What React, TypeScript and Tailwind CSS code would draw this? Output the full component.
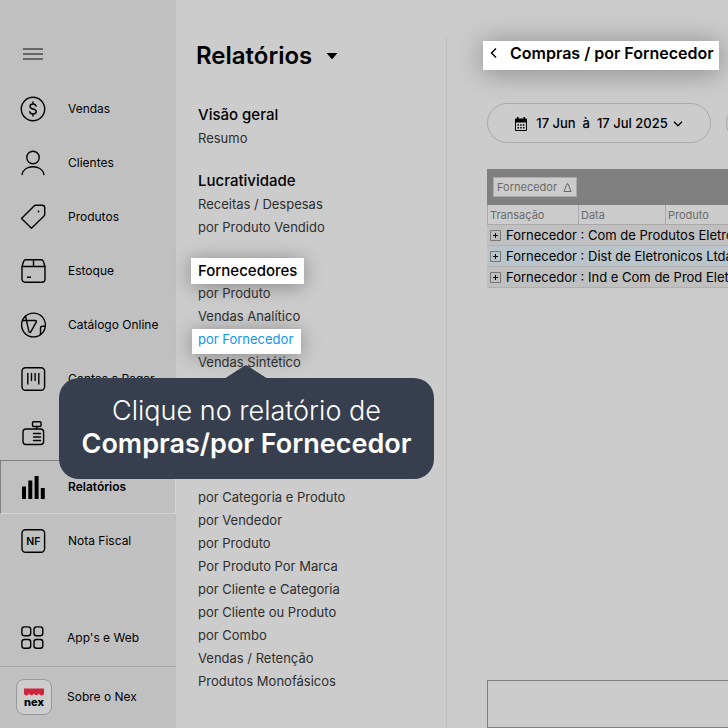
import type { ReactNode } from "react";
import clsx from "clsx";

const icons: Record<string, ReactNode> = {
  vendas: (
    <>
      <circle cx="13" cy="13" r="11.7" />
      <path d="M13 6v2M13 18v2M16 10.2c-.3-1.4-1.4-2.2-3-2.2-1.800 0-3 .9-3 2.400 0 3.400 6.200 1.700 6.200 5.100 0 1.600-1.300 2.500-3.200 2.500-1.800 0-3-.8-3.300-2.400" />
    </>
  ),
  clientes: (
    <>
      <circle cx="13" cy="7.500" r="6.200" />
      <path d="M2 24.500c1-5 5.500-7.800 11-7.800s10 2.800 11 7.800" />
    </>
  ),
  produtos: (
    <>
      <path d="M1.500 14.500 13.800 2.200c.6-.6 1.200-.9 2-.9h6.400c1.500 0 2.500 1 2.500 2.500v6.400c0 .8-.3 1.500-.9 2L11.500 24.300z" />
      <circle cx="18.500" cy="7.500" r=".9" fill="currentColor" stroke="none" />
    </>
  ),
  estoque: (
    <>
      <path d="M2 8.500h23V21c0 2-1.200 3.200-3.200 3.200H5.200C3.200 24.200 2 23 2 21zM2 8.500l1.600-5C4 2.300 4.900 1.700 6 1.700h15c1.100 0 2 .6 2.400 1.800l1.600 5M13.500 1.700v6.800M7.500 19.200h3" />
    </>
  ),
  catalogo: (
    <>
      <circle cx="13.500" cy="13" r="11.900" />
      <path d="M2.500 8.500h12.800c1 0 1.400.8.900 1.600l-5.400 9.700c-.5.900-1.500.8-1.900-.1L5.500 3.900M25.200 14.300h-2.700c-1.200 0-2 .8-2 2v6.200" />
    </>
  ),
  contas: (
    <>
      <rect x="2" y="1.700" width="22.600" height="22.600" rx="3.500" />
      <path d="M7.800 7.500v10.500M11.500 7.500v7M15.100 7.500v7M18.800 7.500v10.500" />
    </>
  ),
  caixa: (
    <>
      <rect x="3" y="9" width="20.600" height="15.500" rx="3" />
      <rect x="12.500" y="1.700" width="8.500" height="4.800" rx="1" />
      <path d="M16.700 6.500V9M13.500 13.500h7M13.500 17h7M13.500 20.500h7" />
    </>
  ),
  relatorios: (
    <path
      d="M2 12.500h4v12.500H2zM8.300 6.500h4V25h-4zM14.600 2h4v23h-4zM20.800 14h4v11h-4z"
      fill="currentColor"
      stroke="none"
    />
  ),
  nota: (
    <>
      <rect x="2" y="1.700" width="22.600" height="22.600" rx="3.500" />
      <text
        x="13.300"
        y="17"
        textAnchor="middle"
        fontSize="10.500"
        fontWeight="600"
        fill="currentColor"
        stroke="none"
      >
        NF
      </text>
    </>
  ),
  apps: (
    <>
      <rect x="1.900" y="1.900" width="8.800" height="8.800" rx="2.500" />
      <rect x="14" y="1.900" width="8.800" height="8.800" rx="2.500" />
      <rect x="1.900" y="14.500" width="8.800" height="8.800" rx="2.500" />
      <rect x="14" y="14.500" width="8.800" height="8.800" rx="2.500" />
    </>
  ),
};

const NAV_ITEMS = [
  { icon: "vendas", label: "Vendas" },
  { icon: "clientes", label: "Clientes" },
  { icon: "produtos", label: "Produtos" },
  { icon: "estoque", label: "Estoque" },
  { icon: "catalogo", label: "Catálogo Online" },
  { icon: "contas", label: "Contas a Pagar" },
  { icon: "caixa" },
  { icon: "relatorios", label: "Relatórios", active: true },
  { icon: "nota", label: "Nota Fiscal" },
];

const REPORT_GROUPS = [
  { title: "Visão geral", items: ["Resumo"] },
  { title: "Lucratividade", items: ["Receitas / Despesas", "por Produto Vendido"] },
  {
    title: "Fornecedores",
    items: ["por Produto", "Vendas Analítico", "por Fornecedor", "Vendas Sintético"],
  },
];

const SALES_REPORTS = [
  "por Categoria e Produto",
  "por Vendedor",
  "por Produto",
  "Por Produto Por Marca",
  "por Cliente e Categoria",
  "por Cliente ou Produto",
  "por Combo",
  "Vendas / Retenção",
  "Produtos Monofásicos",
];

const SUPPLIERS = [
  "Com de Produtos Eletronicos",
  "Dist de Eletronicos Ltda",
  "Ind e Com de Prod Eletronicos",
];

function Icon({ name }: { name: string }) {
  return (
    <svg
      viewBox="0 0 26 26"
      className="size-[26px] shrink-0"
      fill="none"
      stroke="currentColor"
      strokeWidth="1.4"
      strokeLinecap="round"
      strokeLinejoin="round"
      aria-hidden="true"
    >
      {icons[name]}
    </svg>
  );
}

function Sidebar() {
  return (
    <aside className="flex w-44 shrink-0 flex-col bg-[#c0c0c0] text-xs text-black">
      <div className="flex h-[82px] items-center px-[23px] pt-[26px]">
        <button type="button" aria-label="Menu" className="w-5">
          <svg viewBox="0 0 20 12" className="h-3 w-5" stroke="#484848" strokeWidth="1.400" aria-hidden="true">
            <path d="M0 1h20M0 6h20M0 11h20" />
          </svg>
        </button>
      </div>
      <nav>
        {NAV_ITEMS.map((item) => (
          <a
            key={item.icon}
            href="#"
            aria-label={item.label ?? item.icon}
            className={clsx(
              "flex h-[54px] items-center gap-[22px] border pl-[19px]",
              item.active
                ? "border-t-[#808080] border-r-[#d4d4d4] border-b-[#d4d4d4] border-l-[#808080] font-semibold"
                : "border-transparent"
            )}
          >
            <Icon name={item.icon} />
            {item.label}
          </a>
        ))}
      </nav>
      <div className="mt-auto">
        <a href="#" className="flex h-[58px] items-center gap-[21px] border-b border-[#a9a9a9] pl-5">
          <Icon name="apps" />
          App's e Web
        </a>
        <a href="#" className="flex h-[61px] items-center gap-[15px] pb-0.5 pl-4">
          <svg viewBox="0 0 36 36" className="size-9 shrink-0" aria-hidden="true">
            <rect x=".5" y=".5" width="35" height="35" rx="7.500" fill="#cdcdcd" stroke="#999" />
            <path
              d="M8 9.500h20v4a2.500 2.500 0 0 1-5 .8 2.600 2.600 0 0 1-5 0 2.600 2.600 0 0 1-5 0 2.500 2.500 0 0 1-5-.8z"
              fill="#d0243c"
            />
            <text x="18" y="27" textAnchor="middle" fontSize="11" fontWeight="800">
              nex
            </text>
          </svg>
          Sobre o Nex
        </a>
      </div>
    </aside>
  );
}

function ReportLink({ label, active }: { label: string; active?: boolean }) {
  return (
    <li className="flex h-[23px] items-start pt-px">
      <a
        href="#"
        className={clsx(
          "leading-[21px]",
          active
            ? "-ml-1.5 bg-white pr-2 pb-1 pl-1.5 text-[#0a95f7] shadow-[0_2px_20px_rgba(0,0,0,0.35)]"
            : "text-[#2e2e2e]"
        )}
      >
        {label}
      </a>
    </li>
  );
}

function ReportMenu() {
  return (
    <section className="w-[271px] shrink-0 pt-9">
      <div className="h-full border-r border-[#bdbdbd] pl-[22px]">
        <button type="button" className="-ml-0.5 flex h-10 items-center gap-3.5 text-2xl font-semibold">
          Relatórios
          <svg viewBox="0 0 12 6" className="h-1.5 w-3" aria-hidden="true">
            <path d="M.5 0h11L6.800 5.400a1 1 0 0 1-1.600 0z" />
          </svg>
        </button>
        <div className="mt-7 flex flex-col gap-5 text-[13px]">
          {REPORT_GROUPS.map((group) => (
            <div key={group.title}>
              <h2 className="flex h-[23px] items-center text-[15px] font-medium text-black">
                {group.title === "Fornecedores" ? (
                  <span className="-ml-[7px] shrink-0 bg-white px-[7px] leading-[26px] shadow-[0_2px_20px_rgba(0,0,0,0.35)]">
                    {group.title}
                  </span>
                ) : (
                  group.title
                )}
              </h2>
              <ul>
                {group.items.map((label) => (
                  <ReportLink key={label} label={label} active={label === "por Fornecedor"} />
                ))}
              </ul>
            </div>
          ))}
        </div>
        <ul className="mt-28 pb-8 text-[13px]">
          {SALES_REPORTS.map((label) => (
            <ReportLink key={label} label={label} />
          ))}
        </ul>
      </div>
    </section>
  );
}

function SupplierTable() {
  return (
    <div className="mt-[26px] w-[480px] bg-[#808080]">
      <div className="flex h-9 items-center pl-1.5">
        <button
          type="button"
          className="flex h-5 items-center gap-1.5 border border-[#aaa] bg-[#ccc] pr-1 pl-[3px] text-[11px] text-[#6b6b6b]"
        >
          Fornecedor
          <svg viewBox="0 0 9 9" className="size-[9px]" fill="none" stroke="#666" aria-hidden="true">
            <path d="M1 8.500h7L5 .8H4z" />
          </svg>
        </button>
      </div>
      <table className="w-full table-fixed border-separate border-spacing-0 text-left">
        <thead>
          <tr className="h-5 bg-[#ccc] text-[11px] text-[#6b6b6b]">
            <th className="w-[91px] border-b border-l border-[#aaa] p-0 pt-0.5 pl-0.5 font-normal">Transação</th>
            <th className="w-[87px] border-b border-l border-[#aaa] p-0 pt-0.5 pl-0.5 font-normal">Data</th>
            <th className="border-b border-l border-[#aaa] p-0 pt-0.5 pl-0.5 font-normal">Produto</th>
          </tr>
        </thead>
        <tbody>
          {SUPPLIERS.map((name) => (
            <tr key={name} className="h-[21px] bg-[#c0c0c0] text-[13px] text-black even:bg-[#b9c5cb]">
              <td colSpan={3} className="border-b border-[#b0b0b0] p-0 pl-[3px]">
                <div className="flex items-center gap-[5px] leading-5 whitespace-nowrap">
                  <button type="button" aria-label="Expandir" className="size-[11px]">
                    <svg viewBox="0 0 11 11" fill="none" aria-hidden="true">
                      <path d="M.5.5h10v10H.5z" stroke="#777" />
                      <path d="M3 5.500h5M5.500 3v5" stroke="#000" />
                    </svg>
                  </button>
                  Fornecedor : {name}
                </div>
              </td>
            </tr>
          ))}
        </tbody>
      </table>
    </div>
  );
}

function ReportView() {
  return (
    <main className="flex min-w-0 flex-1 flex-col overflow-hidden pt-[41px] pl-10">
      <h1 className="-ml-1 flex h-[29px] w-[236px] shrink-0 items-center gap-3 bg-white pb-[5px] pl-[7px] text-base font-semibold whitespace-nowrap text-black shadow-[0_2px_28px_rgba(0,0,0,0.35)]">
        <button type="button" aria-label="Voltar">
          <svg viewBox="0 0 8 12" className="h-3 w-2" fill="none" stroke="currentColor" strokeWidth="1.500">
            <path d="M6 1.500 1.500 6 6 10.500" />
          </svg>
        </button>
        Compras / por Fornecedor
      </h1>
      <div className="mt-[33px] flex gap-[15px]">
        <button
          type="button"
          className="flex h-10 w-56 shrink-0 items-center justify-center rounded-full border border-[#aaa] pt-0.5 text-[13px] font-medium whitespace-pre text-black"
        >
          <svg viewBox="0 0 12 14" className="mr-[9px] h-3.5 w-3" aria-hidden="true">
            <path d="M2 0h1.500v1.500h5V0H10v1.500h.8c.7 0 1.200.5 1.200 1.200v10c0 .7-.5 1.300-1.200 1.300H1.200C.5 14 0 13.400 0 12.700v-10c0-.7.5-1.200 1.200-1.200H2z" />
            <path d="M1 5.500h10V13H1z" fill="#ccc" />
            <path d="M2.500 8h7M2.500 10.800h7" stroke="#000" strokeWidth="1.500" strokeDasharray="1.500 1.200" />
          </svg>
          17 Jun{"  "}à{"  "}17 Jul 2025
          <svg viewBox="0 0 10 6" className="ml-[5px] h-1.5 w-2.5" fill="none" stroke="currentColor" strokeWidth="1.300">
            <path d="M1 .8 5 4.800 9 .8" />
          </svg>
        </button>
        <button
          type="button"
          aria-label="Filtro"
          className="h-10 w-56 shrink-0 rounded-full border border-[#aaa]"
        />
      </div>
      <SupplierTable />
      <div className="mt-auto h-12 w-[480px] shrink-0 border border-[#808080]" />
    </main>
  );
}

export default function App() {
  return (
    <div className="relative flex min-h-screen overflow-hidden bg-[#ccc] font-['Inter',sans-serif]">
      <Sidebar />
      <ReportMenu />
      <ReportView />

      {/* tutorial balloon pointing at the highlighted report */}
      <div
        role="tooltip"
        className="absolute top-[378px] left-[59px] w-[375px] rounded-[20px] bg-[#373f4e] pt-4 pb-[19px] text-center text-[27px] leading-[33px] font-light whitespace-nowrap text-white"
      >
        <svg viewBox="0 0 44 14" className="absolute -top-[13px] left-[165px] h-3.5 w-11" aria-hidden="true">
          <path d="M0 14 20 1q2-1.300 4 0l20 13z" fill="#373f4e" />
        </svg>
        <p>Clique no relatório de</p>
        <p className="font-semibold">Compras/por Fornecedor</p>
      </div>
    </div>
  );
}
